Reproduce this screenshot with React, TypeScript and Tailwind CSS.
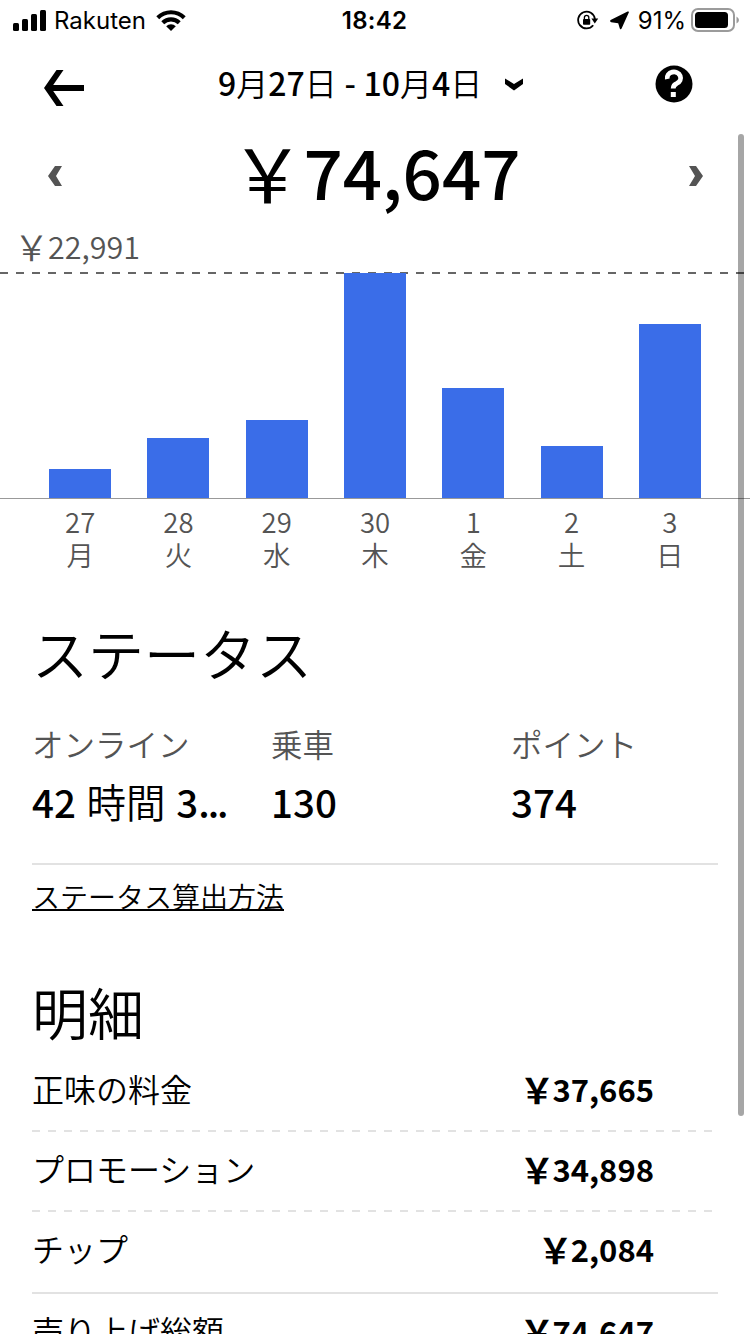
import React from "react";

interface DayEarning {
  date: string;
  weekday: string;
  height: number;
}

interface BreakdownItem {
  label: string;
  amount: string;
  divider?: "dashed" | "solid";
}

// Full-width yen sign
const YEN = "\uFFE5";

const days: DayEarning[] = [
  { date: "27", weekday: "月", height: 29 },
  { date: "28", weekday: "火", height: 60 },
  { date: "29", weekday: "水", height: 78.5 },
  { date: "30", weekday: "木", height: 225 },
  { date: "1", weekday: "金", height: 110.5 },
  { date: "2", weekday: "土", height: 52 },
  { date: "3", weekday: "日", height: 174.5 },
];

const breakdown: BreakdownItem[] = [
  { label: "正味の料金", amount: "37,665", divider: "dashed" },
  { label: "プロモーション", amount: "34,898", divider: "dashed" },
  { label: "チップ", amount: "2,084", divider: "solid" },
  { label: "売り上げ総額", amount: "74,647" },
];

const DashedLine: React.FC<{ color: string }> = ({ color }) => (
  <svg className="block h-[2px] w-full" aria-hidden="true">
    <line x1="0" y1="1" x2="100%" y2="1" stroke={color} strokeWidth="2" strokeDasharray="8 8" />
  </svg>
);

const StatusBar = () => (
  <div className="flex h-10 items-center justify-between pl-[13px] pr-[11px] font-['Inter',sans-serif] text-[24px] leading-10">
    <div className="flex w-[300px] items-center">
      <svg width="33" height="21" viewBox="0 0 33 21">
        <rect x="0" y="13" width="6" height="8" rx="1.5" />
        <rect x="9" y="9" width="6" height="12" rx="1.5" />
        <rect x="18" y="4" width="6" height="17" rx="1.5" />
        <rect x="27" y="0" width="6" height="21" rx="1.5" />
      </svg>
      <span className="ml-[8px] mt-[2px] w-[102px] whitespace-nowrap">Rakuten</span>
      <svg width="30" height="22" viewBox="0 0 30 22">
        <path d="M0.3 7.2A21 21 0 0 1 29.7 7.2L26.8 10.2A16.8 16.8 0 0 0 3.2 10.2Z" />
        <path d="M5.3 12.3A13.8 13.8 0 0 1 24.7 12.3L21.8 15.2A9.7 9.7 0 0 0 8.2 15.2Z" />
        <path d="M10.2 17.2A6.8 6.8 0 0 1 19.8 17.2L15 22Z" />
      </svg>
    </div>
    <span className="mr-[3px] mt-[2px] font-semibold tracking-[0.3px]">18:42</span>
    <div className="flex w-[300px] items-center justify-end">
      <svg width="22" height="20" viewBox="0 0 22 20">
        <path d="M16.2 15.2A8.4 8.4 0 1 1 17.9 9" fill="none" stroke="black" strokeWidth="1.8" />
        <path d="M14.4 8.6H21.2L17.8 13.4Z" />
        <rect x="6" y="9" width="7.2" height="5.8" rx="0.8" />
        <path d="M7.4 9V7.5A2.2 2.2 0 0 1 11.8 7.5V9" fill="none" stroke="black" strokeWidth="1.3" />
      </svg>
      <svg className="ml-[11px]" width="20" height="19" viewBox="0 0 20 19">
        <path d="M0.6 9L17.6 0.5Q19.4 0 18.8 1.6L11.6 17.6Q10.6 19 9.8 17.4L8.2 12.2L1.2 11.2Q-0.6 10.2 0.6 9Z" />
      </svg>
      <span className="ml-[8px] mt-[2px] whitespace-nowrap">91%</span>
      <svg className="ml-[5px]" width="48" height="24" viewBox="0 0 48 24">
        <rect x="1" y="1" width="42" height="22" rx="6" fill="none" stroke="#9b9b9b" strokeWidth="2" />
        <rect x="4" y="4" width="33" height="16" rx="3.5" />
        <path d="M45.5 8.5Q48 10 48 12T45.5 15.5Z" fill="#9b9b9b" />
      </svg>
    </div>
  </div>
);

const Header = () => (
  <header className="flex h-[90px] items-start pl-[43px] pr-[57px]">
    <button type="button" className="mt-[29px]" aria-label="戻る">
      <svg width="42" height="38" viewBox="0 0 42 38">
        <path d="M1 19L13.5 1H20.5L10.2 16H41V22H10.2L20.5 37H13.5Z" />
      </svg>
    </button>
    <button type="button" className="ml-[133px] mt-[18px] flex h-12 items-center">
      <span className="w-[264px] whitespace-nowrap text-left text-[32px] font-[350] leading-[48px] [word-spacing:0.5px]">
        <b className="font-medium">9</b>月<b className="font-medium">27</b>日
        <b className="font-medium"> - 10</b>月<b className="font-medium">4</b>日
      </span>
      <svg className="ml-[23px] mt-[4px]" width="18" height="13" viewBox="0 0 18 13">
        <path d="M0 0.5L9 6L18 0.5V6L9 12.5L0 6Z" />
      </svg>
    </button>
    <button type="button" className="ml-auto mt-[25px]" aria-label="ヘルプ">
      <svg width="38" height="38" viewBox="0 0 38 38">
        <circle cx="19" cy="19" r="18.5" />
        <path
          d="M12.3 14A6.7 6 0 1 1 21.8 18.4Q18.2 19.8 18.2 23.6"
          fill="none"
          stroke="white"
          strokeWidth="4.8"
        />
        <rect x="15.8" y="27" width="5" height="5" fill="white" />
      </svg>
    </button>
  </header>
);

const WeeklyTotal = () => (
  <div className="flex h-[95px] items-start justify-between pl-12 pr-[47px]">
    <svg className="mt-[36px]" width="14" height="20" viewBox="0 0 14 20" fill="#545454">
      <path d="M0 10L7 0H14L8 10L14 20H7Z" />
    </svg>
    <div className="-mt-[7px] flex items-center leading-[95px]">
      <span className="w-[73px] whitespace-nowrap text-[74px]">{YEN}</span>
      <span className="text-[69px] font-medium">74,647</span>
    </div>
    <svg className="mt-[36px]" width="14" height="20" viewBox="0 0 14 20" fill="#545454">
      <path d="M14 10L7 0H0L6 10L0 20H7Z" />
    </svg>
  </div>
);

const EarningsChart = () => (
  <section className="text-[#545454]">
    <div className="flex h-[47px] items-center pl-[14px] font-[350] leading-[43px]">
      <span className="-mt-[6px] w-[34px] whitespace-nowrap text-[35px]">{YEN}</span>
      <span className="-mt-1 text-[30.5px]">22,991</span>
    </div>
    <DashedLine color="#666666" />
    <div className="-mt-px flex h-[225px] items-end px-[31px]">
      {days.map((day) => (
        <div key={day.date} className="flex flex-1 justify-center">
          <div className="w-[62px] bg-[#3a6de8]" style={{ height: day.height }} />
        </div>
      ))}
    </div>
    <div className="h-px bg-[#999999]" />
    <div className="flex h-[101px] px-[31px] pt-[6px] text-center font-[350]">
      {days.map((day) => (
        <div key={day.date} className="flex-1 text-[27.5px] leading-[33px]">
          <div>{day.date}</div>
          <div>{day.weekday}</div>
        </div>
      ))}
    </div>
  </section>
);

const Stat: React.FC<{ label: string; children: React.ReactNode }> = ({ label, children }) => (
  <div className="min-w-0 pt-[9px]">
    <div className="text-[31.5px] font-[350] leading-[44px] text-[#545454]">{label}</div>
    <div className="mt-[8px] whitespace-nowrap text-[38.5px] font-medium leading-[56px]">
      {children}
    </div>
  </div>
);

const StatusSection = () => (
  <section className="px-8">
    <h2 className="h-[112px] pt-[12px] text-[56px] font-[350] leading-[80px]">ステータス</h2>
    <div className="grid h-[151px] grid-cols-[239px_240px_1fr]">
      <Stat label="オンライン">
        <span className="[word-spacing:2px]">
          42 <span className="text-[39.5px] font-[350]">時間</span> 3
          <span className="-tracking-[2px]">...</span>
        </span>
      </Stat>
      <Stat label="乗車">130</Stat>
      <Stat label="ポイント">374</Stat>
    </div>
    <div className="h-[2px] bg-[#e2e2e2]" />
    <div className="h-[90px] pt-[7px]">
      <a className="inline-block h-[39px] border-b-2 border-black text-[28px] font-[350] leading-[48px]">
        ステータス算出方法
      </a>
    </div>
  </section>
);

const BreakdownSection = () => (
  <section className="px-8">
    <h2 className="h-[97px] pt-[18px] text-[56px] font-[350] leading-[76px]">明細</h2>
    {breakdown.map((item) => (
      <div key={item.label}>
        <div className="flex h-[78px] items-center justify-between pr-[64px] pb-[3px]">
          <span className="-mt-[3px] text-[32px] font-[350]">{item.label}</span>
          <span className="flex items-center font-bold">
            <span className="-mt-[2px] w-[33px] whitespace-nowrap text-[35px] leading-[46px]">
              {YEN}
            </span>
            <span className="text-[31px]">{item.amount}</span>
          </span>
        </div>
        {item.divider === "dashed" && <DashedLine color="#e2e2e2" />}
        {item.divider === "solid" && <div className="mt-[2px] h-[2px] bg-[#e2e2e2]" />}
      </div>
    ))}
  </section>
);

export default function App() {
  return (
    <div className="relative h-[1334px] w-[750px] overflow-hidden bg-white font-['Noto_Sans_CJK_JP',sans-serif] text-black">
      <StatusBar />
      <Header />
      <WeeklyTotal />
      <EarningsChart />
      <StatusSection />
      <BreakdownSection />
      {/* Scroll indicator floats over the page */}
      <div className="absolute right-[6px] top-[134px] h-[982px] w-[6px] rounded-full bg-black/35" />
    </div>
  );
}
